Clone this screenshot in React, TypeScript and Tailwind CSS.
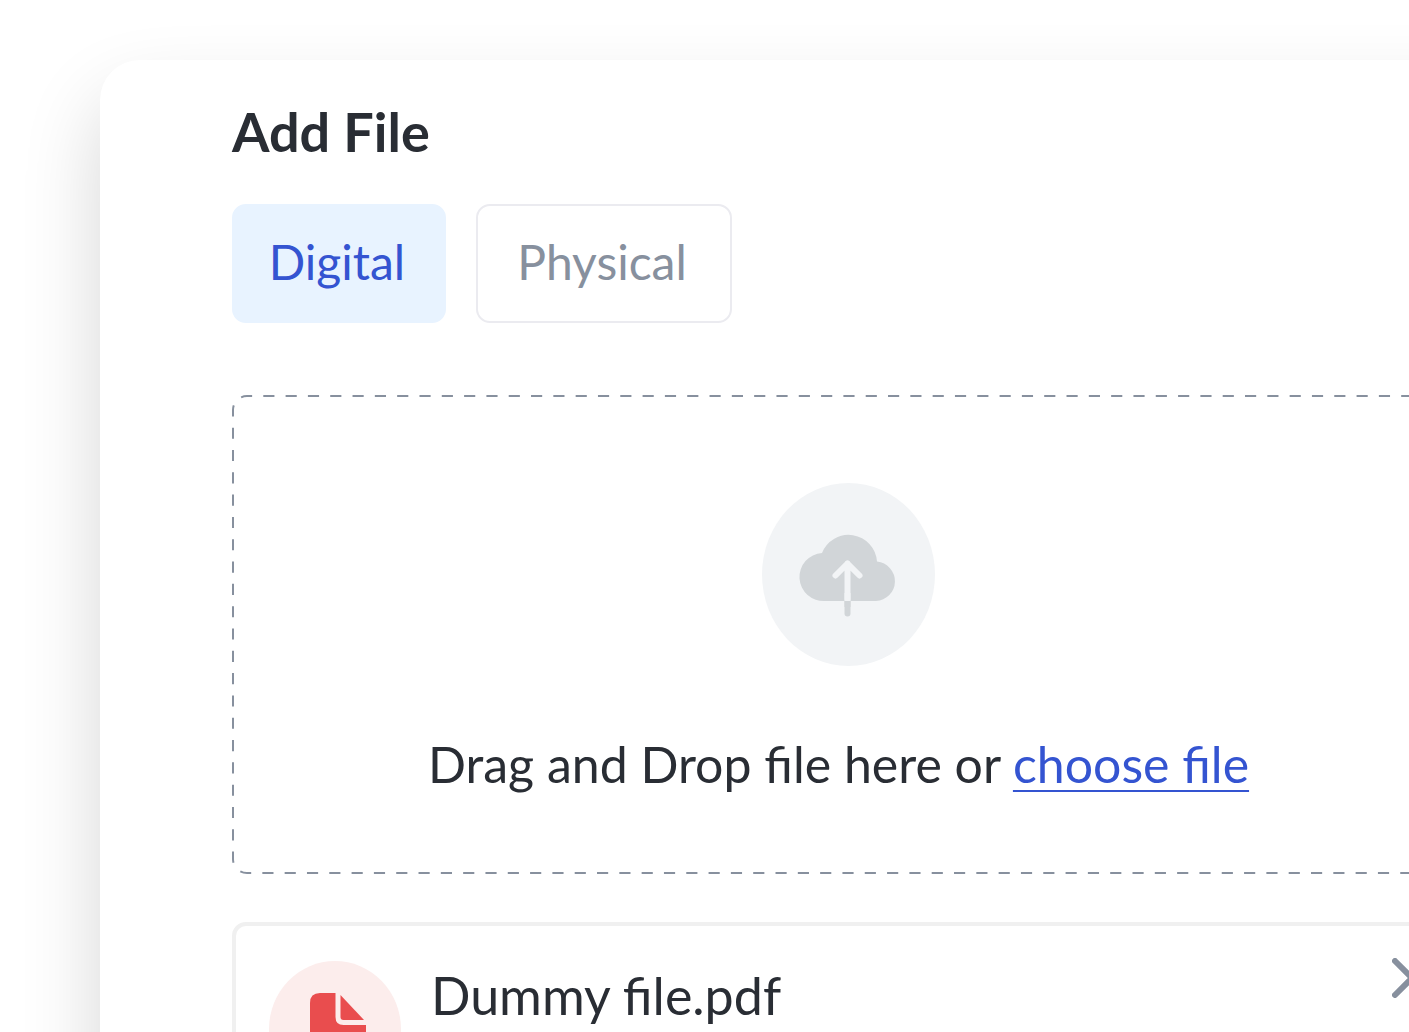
import { useState } from "react";

function CloudUpload() {
  return (
    <svg viewBox="0 0 96 84" className="mr-px h-[84px] w-24 overflow-visible" aria-hidden="true">
      <path
        d="M25 68A24 24 0 0 1 22 20A28.500 28.500 0 0 1 77 28.600A19.750 19.750 0 0 1 76 68Z"
        fill="#d1d5d8"
      />
      <path d="M47.500 68.500V80.500" stroke="#d1d5d8" strokeWidth="6" strokeLinecap="round" />
      <path d="M47.500 66V30.500M35.500 42.500L47.500 30.500L59.500 42.500" fill="none" stroke="#f2f4f6" strokeWidth="6" strokeLinecap="round" strokeLinejoin="round" />
      <rect x="44.500" y="60" width="6" height="8" fill="#f2f4f6" />
      <rect x="44.500" y="68" width="6" height="6" fill="#d1d5d8" />
    </svg>
  );
}

function PdfIcon() {
  return (
    <svg viewBox="0 0 56 72" className="ml-1.5 h-[72px] w-14" aria-hidden="true">
      <path d="M10 0H25.500V24Q25.500 32 33.500 32H56V62Q56 72 46 72H10Q0 72 0 62V10Q0 0 10 0Z" fill="#e94d4e" />
      <path d="M30.500 2L54 27H33.500Q30.500 27 30.500 24Z" fill="#e94d4e" />
    </svg>
  );
}

const tabs = [
  { name: "Digital", size: "min-w-[214px]" },
  { name: "Physical", size: "min-w-[256px]" },
];

export default function App() {
  const [active, setActive] = useState("Digital");
  return (
    <div className="h-screen overflow-hidden bg-white pl-[100px] pt-[60px] font-['Lato',sans-serif] text-[#292d34]">
      <main className="-mr-[188px] rounded-[40px] bg-white px-[132px] pb-32 pt-10 shadow-[0_40px_80px_rgba(0,0,0,0.16)]">
        <h1 className="text-[54px] font-bold leading-[64px]">Add File</h1>
        <div className="mt-10 flex gap-[30px]">
          {tabs.map((t) => (
            <button
              key={t.name}
              type="button"
              onClick={() => setActive(t.name)}
              className={`h-[119px] rounded-[14px] border-2 pb-1 pl-8 pr-9 text-[48px] leading-[60px] ${t.size} ${
                active === t.name
                  ? "border-[#e8f3ff] bg-[#e8f3ff] text-[#3454d1]"
                  : "border-[#ebebf0] bg-white text-[#87909e]"
              }`}
            >
              {t.name}
            </button>
          ))}
        </div>

        <section className="relative mt-[72px] flex flex-col items-center pb-[76px] pt-[88px]">
          <svg className="pointer-events-none absolute left-px top-px h-[calc(100%-2px)] w-[calc(100%-2px)] overflow-visible" aria-hidden="true">
            <rect width="100%" height="100%" rx="14" fill="none" stroke="#87909e" strokeWidth="2" pathLength="304" strokeDasharray="1 1" strokeDashoffset="0.54" />
          </svg>
          <div className="flex h-[183px] w-[173px] items-center justify-center rounded-[50%] bg-[#f2f4f6]">
            <CloudUpload />
          </div>
          <p className="mr-5 mt-16 whitespace-nowrap text-[50px] leading-[68px]">
            Drag and Drop file here or{" "}
            <a href="#choose" className="text-[#3454d1] underline decoration-2 underline-offset-[7px]">choose file</a>
          </p>
        </section>

        <section className="mt-12 flex items-start rounded-[14px] border-4 border-[#f0f0f0] py-[35px] pl-[33px] pr-[29px]">
          <div className="flex h-[136px] w-[132px] shrink-0 items-center justify-center rounded-[50%] bg-[#fcedec]">
            <PdfIcon />
          </div>
          <p className="ml-[30px] grow text-[52px] leading-[68px]">Dummy file.pdf</p>
          <button type="button" aria-label="Remove file" className="-mt-[3px]">
            <svg viewBox="0 0 40 40" className="size-10" aria-hidden="true">
              <path d="M3 3L37 37M37 3L3 37" stroke="#87909e" strokeWidth="6" strokeLinecap="round" />
            </svg>
          </button>
        </section>
      </main>
    </div>
  );
}
